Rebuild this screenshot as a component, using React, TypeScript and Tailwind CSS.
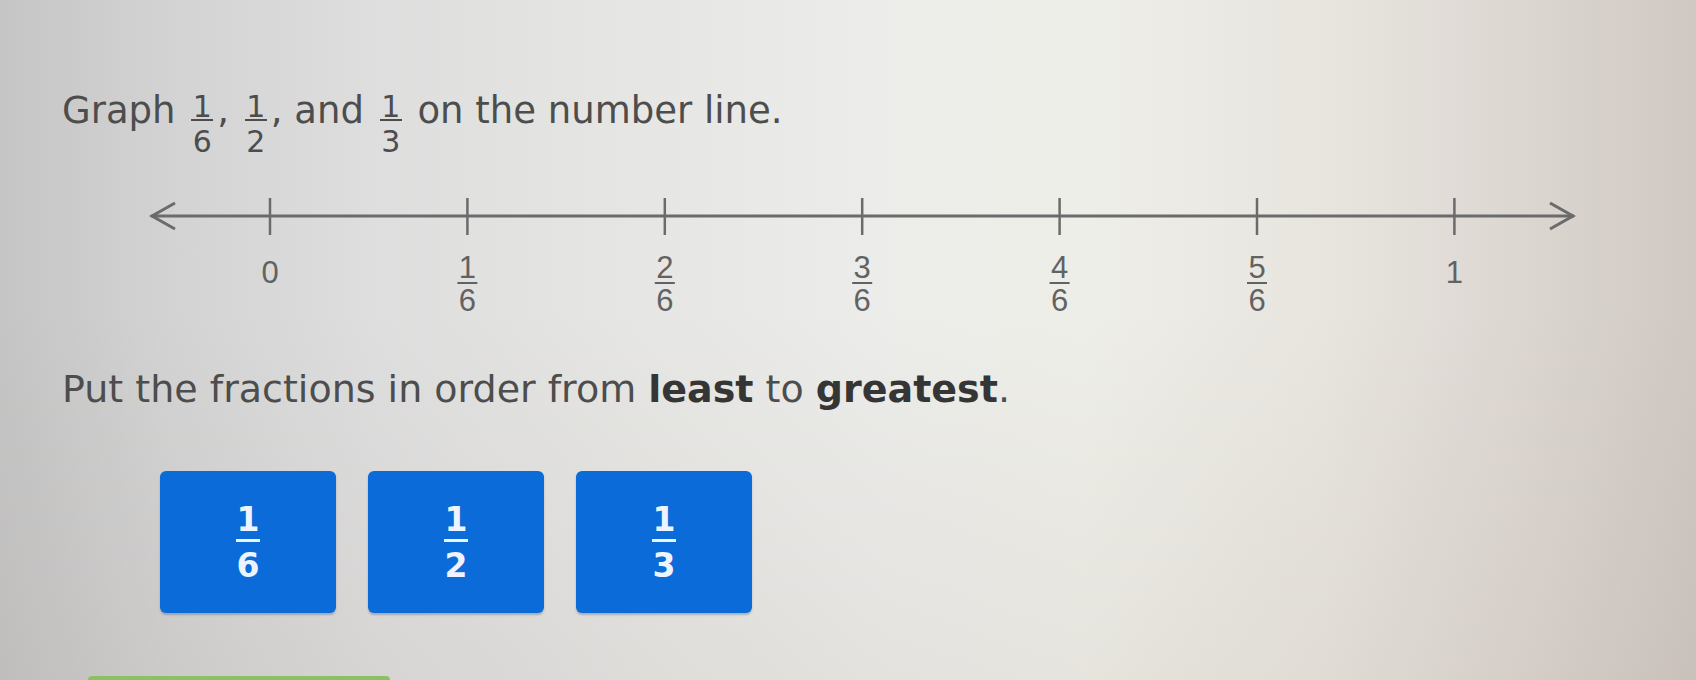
import type { ReactNode } from 'react';

const TICKS = [
  { num: null, den: null, whole: '0' },
  { num: '1', den: '6' },
  { num: '2', den: '6' },
  { num: '3', den: '6' },
  { num: '4', den: '6' },
  { num: '5', den: '6' },
  { num: null, den: null, whole: '1' },
];

const CHOICES = [
  { num: '1', den: '6' },
  { num: '1', den: '2' },
  { num: '1', den: '3' },
];

// first tick sits at x=208 inside the svg, one sixth apart
const TICK_X0 = 208;
const TICK_STEP = 197.4;
const LINE_Y = 26;

function InlineFraction({ num, den }: { num: string; den: string }) {
  return (
    <span className="mt-[28px] inline-flex flex-col items-center px-[4px] text-[30px]">
      <span className="leading-[35px]">{num}</span>
      <span className="-mt-[5px] mb-[3px] h-[2px] w-[22px] bg-[#4d4d4d]" />
      <span className="leading-[35px]">{den}</span>
    </span>
  );
}

function NumberLine() {
  return (
    <svg
      width={1560}
      height={130}
      viewBox="0 0 1560 130"
      className="mt-[31px] block"
      fill="none"
      stroke="#6b6b6b"
    >
      <line x1={89} y1={LINE_Y} x2={1512} y2={LINE_Y} strokeWidth={3} />
      <polyline points="113,13 90,26 113,39" strokeWidth={3} strokeLinejoin="miter" />
      <polyline points="1488,13 1511,26 1488,39" strokeWidth={3} strokeLinejoin="miter" />
      {TICKS.map((t, i) => {
        const x = TICK_X0 + TICK_STEP * i;
        return (
          <g key={i}>
            <line x1={x} y1={8} x2={x} y2={45} strokeWidth={2.5} />
            {t.whole ? (
              <text
                x={x}
                y={93}
                textAnchor="middle"
                fill="#626262"
                stroke="none"
                fontSize={31}
                fontFamily="'Liberation Sans', Arial, sans-serif"
              >
                {t.whole}
              </text>
            ) : (
              <>
                <text
                  x={x}
                  y={88}
                  textAnchor="middle"
                  fill="#626262"
                  stroke="none"
                  fontSize={31}
                  fontFamily="'Liberation Sans', Arial, sans-serif"
                >
                  {t.num}
                </text>
                <rect x={x - 10} y={92} width={20} height={2} fill="#626262" stroke="none" />
                <text
                  x={x}
                  y={121}
                  textAnchor="middle"
                  fill="#626262"
                  stroke="none"
                  fontSize={31}
                  fontFamily="'Liberation Sans', Arial, sans-serif"
                >
                  {t.den}
                </text>
              </>
            )}
          </g>
        );
      })}
    </svg>
  );
}

function Tile({ children }: { children: ReactNode }) {
  return (
    <div className="flex h-[142px] w-[176px] items-center justify-center rounded-[6px] bg-[#0b6bd8] shadow-[0_2px_2px_rgba(0,40,90,0.25)]">
      {children}
    </div>
  );
}

export default function App() {
  return (
    <div className="h-[680px] w-full overflow-hidden bg-[linear-gradient(180deg,rgba(0,0,0,0)_45%,rgba(120,95,80,0.07)_100%),linear-gradient(90deg,#c5c5c5_0%,#d3d3d3_10%,#dedede_22%,#e6e6e4_38%,#ececea_52%,#eeeee8_64%,#e8e5df_78%,#dcd6d1_90%,#cfc8c3_100%)] font-['DejaVu_Sans',Verdana,sans-serif] text-[#4d4d4d]">
      <div className="pl-[62px] pt-[61px]">
        {/* prompt */}
        <div className="flex items-center text-[37px] leading-none">
          <span>Graph&nbsp;</span>
          <InlineFraction num="1" den="6" />
          <span>,&nbsp;</span>
          <InlineFraction num="1" den="2" />
          <span>, and&nbsp;</span>
          <InlineFraction num="1" den="3" />
          <span>&nbsp;on the number line.</span>
        </div>

        <NumberLine />

        <p className="mt-[50px] text-[38px] leading-none">
          Put the fractions in order from <span className="font-bold text-[#353535]">least</span> to{' '}
          <span className="font-bold text-[#353535]">greatest</span>.
        </p>

        {/* draggable answers */}
        <div className="ml-[98px] mt-[63px] flex gap-[32px]">
          {CHOICES.map((c, i) => (
            <Tile key={i}>
              <div className="flex flex-col items-center text-[33px] font-bold leading-none text-[#eef4ff]">
                <span>{c.num}</span>
                <span className="mb-[7px] mt-[3px] h-[3px] w-[24px] bg-[#eef4ff]" />
                <span>{c.den}</span>
              </div>
            </Tile>
          ))}
        </div>

        <div className="ml-[26px] mt-[63px] h-[44px] w-[302px] rounded-t-[4px] bg-[#8cc063]" />
      </div>
    </div>
  );
}
